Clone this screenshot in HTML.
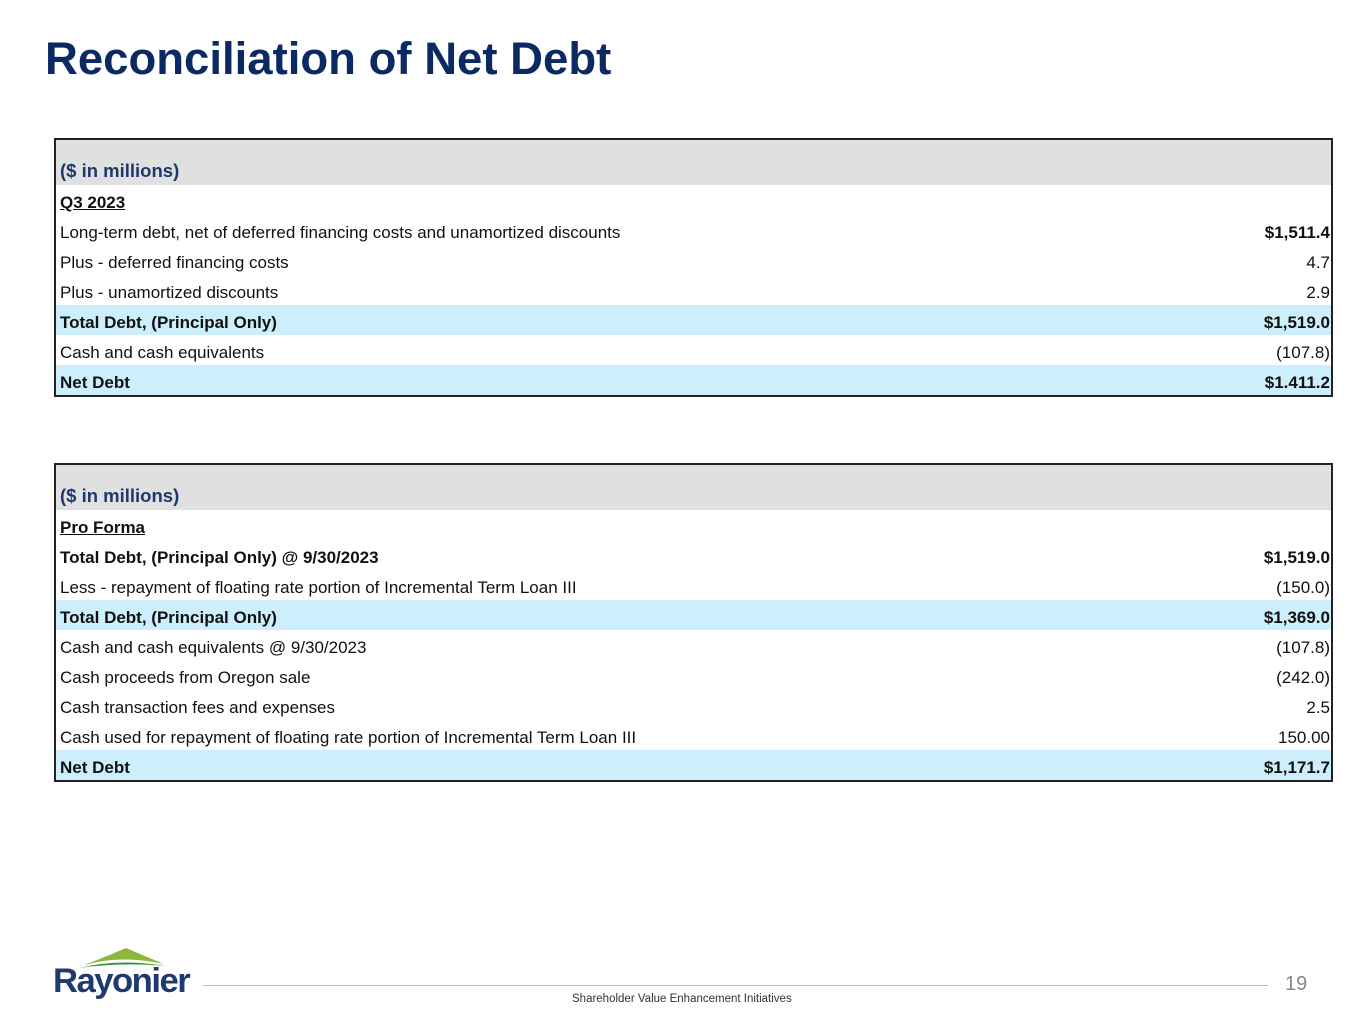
<!DOCTYPE html>
<html><head><meta charset="utf-8"><style>
body{margin:0;width:1365px;height:1024px;background:#fff;font-family:"Liberation Sans",Arial,sans-serif;position:relative;overflow:hidden}
h1{position:absolute;left:45px;top:33px;margin:0;font-size:45.5px;font-weight:bold;color:#0b2a64}
.t{position:absolute;left:54px;width:1275px;border:2px solid #222;}
.h{height:45px;background:#e0e0e0;position:relative}
.h span{position:absolute;left:4px;bottom:3px;font-size:18.5px;font-weight:bold;color:#1b3a6a}
.r{height:23px;padding-top:7px;line-height:22px;font-size:17px;color:#111;position:relative;padding-left:4px}
.r b.v,.r span.v{position:absolute;right:1px;top:7px}
.b{background:#cdeefb;font-weight:bold}
.u{font-weight:bold;text-decoration:underline}
.foot{position:absolute;left:572px;top:993px;font-size:11.5px;color:#333}
.line{position:absolute;left:203px;top:985px;width:1065px;height:1px;background:#bbb}
.pg{position:absolute;left:1285px;top:973px;font-size:20px;color:#888}
</style></head><body>
<h1>Reconciliation of Net Debt</h1>
<div class="t" style="top:138px">
<div class="h"><span>($ in millions)</span></div>
<div class="r u">Q3 2023</div>
<div class="r">Long-term debt, net of deferred financing costs and unamortized discounts<b class="v">$1,511.4</b></div>
<div class="r">Plus - deferred financing costs<span class="v">4.7</span></div>
<div class="r">Plus - unamortized discounts<span class="v">2.9</span></div>
<div class="r b">Total Debt, (Principal Only)<b class="v">$1,519.0</b></div>
<div class="r">Cash and cash equivalents<span class="v">(107.8)</span></div>
<div class="r b">Net Debt<b class="v">$1.411.2</b></div>
</div>
<div class="t" style="top:463px">
<div class="h"><span>($ in millions)</span></div>
<div class="r u">Pro Forma</div>
<div class="r" style="font-weight:bold">Total Debt, (Principal Only) @ 9/30/2023<b class="v">$1,519.0</b></div>
<div class="r">Less - repayment of floating rate portion of Incremental Term Loan III<span class="v">(150.0)</span></div>
<div class="r b">Total Debt, (Principal Only)<b class="v">$1,369.0</b></div>
<div class="r">Cash and cash equivalents @ 9/30/2023<span class="v">(107.8)</span></div>
<div class="r">Cash proceeds from Oregon sale<span class="v">(242.0)</span></div>
<div class="r">Cash transaction fees and expenses<span class="v">2.5</span></div>
<div class="r">Cash used for repayment of floating rate portion of Incremental Term Loan III<span class="v">150.00</span></div>
<div class="r b">Net Debt<b class="v">$1,171.7</b></div>
</div>
<svg style="position:absolute;left:78px;top:946px" width="90" height="22" viewBox="0 0 90 22">
<path d="M4 20 Q40 8 86 18 L62 8 L48 2 L34 8 Z" fill="#8db63c"/>
<path d="M2 22 Q40 12 88 20 Q40 16 2 22Z" fill="#3a8a3a"/>
</svg>
<div style="position:absolute;left:53px;top:962px;font-size:34px;font-weight:bold;color:#1f3a6e;letter-spacing:-1.5px;transform:scaleX(1.02);transform-origin:left">Rayonier</div>
<div class="line"></div>
<div class="pg">19</div>
<div class="foot">Shareholder Value Enhancement Initiatives</div>
</body></html>
